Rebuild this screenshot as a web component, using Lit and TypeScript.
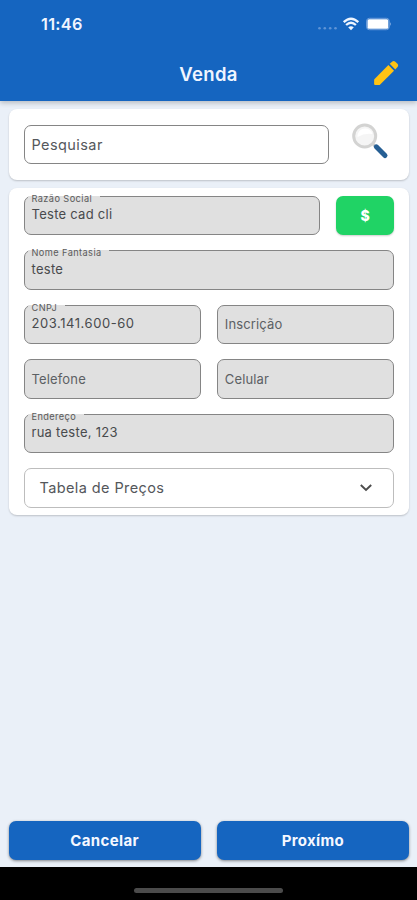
import { LitElement, html, css, nothing } from "lit";
import { customElement, property } from "lit/decorators.js";

@customElement("form-field")
class FormField extends LitElement {
  @property() label = "";
  @property() value = "";

  static styles = css`
    :host { display: block; flex: 1; min-width: 0; }
    .box {
      position: relative; box-sizing: border-box; height: 39.5px;
      border: 1px solid #858585; border-radius: 7px; background: #e0e0e0;
      padding: 0 7px; display: flex; align-items: center;
      font-size: 13px; letter-spacing: 0.15px; color: #5c6064; white-space: nowrap;
    }
    .filled { color: #484a4d; padding-bottom: 2px; letter-spacing: 0.27px; }
    .numeric { letter-spacing: 0.55px; }
    .label {
      position: absolute; left: 3px; top: -4px; padding: 0 7.5px 0 4px;
      font-size: 9.2px; line-height: 11px; letter-spacing: 0.42px; color: #5b5b5b;
      background: linear-gradient(#fff 0 3px, #e0e0e0 3px);
    }
  `;

  render() {
    const numeric = /^[\d.-]+$/.test(this.value);
    return html`<div class="box ${this.value ? "filled" : ""} ${numeric ? "numeric" : ""}">
      ${this.value ? html`<span class="label">${this.label}</span>` : nothing}
      <span>${this.value || this.label}</span>
    </div>`;
  }
}

@customElement("app-root")
class AppRoot extends LitElement {
  static styles = css`
    :host {
      display: flex; flex-direction: column; height: 900px; width: 100%;
      background: #eaf0f8; font-family: Inter, "Liberation Sans", sans-serif; overflow: hidden;
    }
    svg { display: block; }
    header {
      height: 100.5px; box-sizing: border-box; flex: none; background: #1565c0; color: #f0f5ff;
      box-shadow: 0 2px 5px rgba(0, 0, 0, 0.22);
    }
    .status { height: 48px; display: flex; align-items: center; padding: 0 26px 0 41px; justify-content: space-between; }
    .time { font-size: 16.3px; font-weight: 600; letter-spacing: 0.3px; }
    .bar { height: 51px; display: grid; grid-template-columns: 1fr auto 1fr; align-items: center; }
    .title { grid-column: 2; font-size: 18.5px; font-weight: 600; letter-spacing: 0.35px; }
    .edit { justify-self: end; margin-right: 18.5px; }
    main { flex: 1; padding: 8.5px 8px 0 8.5px; display: flex; flex-direction: column; gap: 8px; }
    .card { background: #fff; border-radius: 8px; box-shadow: 0 1px 2px rgba(0, 0, 0, 0.2); box-sizing: border-box; }
    .search { height: 71px; padding: 0 20px 0 15px; display: flex; align-items: center; justify-content: space-between; }
    .lens { margin-bottom: 7px; }
    .input {
      width: 305.5px; height: 39px; box-sizing: border-box; border: 1px solid #858585; border-radius: 7px;
      padding: 0 7px; display: flex; align-items: center; font-size: 14.5px; letter-spacing: 0.42px; color: #55585c;
    }
    .form { height: 327px; padding: 7.6px 15px 0; display: flex; flex-direction: column; gap: 15px; }
    .row { display: flex; gap: 16px; height: 39.5px; }
    .money {
      width: 58px; background: #20d365; color: #fff; border-radius: 7px; display: flex; align-items: center;
      justify-content: center; font-size: 14px; font-weight: 800; box-shadow: 0 1px 2px rgba(0, 0, 0, 0.2);
    }
    .select {
      height: 39.5px; box-sizing: border-box; border: 1px solid #bdbdbd; border-radius: 7px; padding: 0 20px 0 15px;
      display: flex; align-items: center; justify-content: space-between; font-size: 14.5px; letter-spacing: 0.4px; color: #54575b;
    }
    .actions { display: flex; gap: 16px; padding: 0 8px 7.5px 8.5px; }
    .btn {
      flex: 1; height: 38.5px; background: #1565c0; color: #f5f8ff; border-radius: 7px; display: flex; align-items: center;
      justify-content: center; font-size: 15px; font-weight: 700; letter-spacing: 0.35px; box-shadow: 0 1px 3px rgba(0, 0, 0, 0.45);
    }
    .home { height: 33px; background: #000; display: flex; justify-content: center; align-items: flex-end; }
    .pill { width: 149px; height: 5px; border-radius: 3px; background: #4b4b4b; margin-bottom: 7px; }
  `;

  render() {
    return html`
      <header>
        <div class="status">
          <span class="time">11:46</span>
          <svg width="75" height="16" viewBox="0 0 75 16">
            <g fill="#5f94d6"><circle cx="3.5" cy="12.3" r="1.3" /><circle cx="8.8" cy="12.3" r="1.3" /><circle cx="14.2" cy="12.3" r="1.3" /><circle cx="19.5" cy="12.3" r="1.3" /></g>
            <g fill="none" stroke="#eef5ff" stroke-width="2.3">
              <path d="M27.7 6.2Q35 -0.8 42.3 6.2" /><path d="M30.1 9Q35 4.5 39.9 9" />
            </g>
            <path d="M35 14.3L32.2 11.3Q35 9.2 37.8 11.3Z" fill="#eef5ff" />
            <rect x="50.6" y="2.3" width="22.6" height="11.4" rx="2.8" fill="none" stroke="#73a1dc" />
            <rect x="51.5" y="3.2" width="20.8" height="9.6" rx="1.5" fill="#fff" />
            <path d="M74 6.3Q75.6 8 74 9.8Z" fill="#8ab1e3" />
          </svg>
        </div>
        <div class="bar">
          <span class="title">Venda</span>
          <svg class="edit" width="27" height="27" viewBox="0 0 27 27">
            <path d="M2.1 19.4L16.4 5.1L22 10.7L7.7 25H3.1Q2.1 25 2.1 24Z" fill="#ffc313" />
            <path d="M17.7 3.8L20.4 1.4Q21.7 .4 23 1.4L25.7 4.1Q26.7 5.4 25.7 6.7L23.3 9.4Z" fill="#ffc313" />
          </svg>
        </div>
      </header>
      <main>
        <div class="card search">
          <div class="input">Pesquisar</div>
          <svg class="lens" width="38" height="38" viewBox="0 0 38 38">
            <path d="M22 22L26 26" stroke="#c9c9c9" stroke-width="2.5" />
            <path d="M25.3 24.8L34 33.5" stroke="#265f94" stroke-width="5" stroke-linecap="round" />
            <circle cx="13.7" cy="14" r="11" fill="#f5f5f5" stroke="#d3d3d2" stroke-width="3" />
            <path d="M6.5 13Q8 6.5 14 6.5T21.5 12Q14 10.5 6.5 15Z" fill="#fff" />
          </svg>
        </div>
        <div class="card form">
          <div class="row"><form-field label="Razão Social" value="Teste cad cli"></form-field><div class="money">$</div></div>
          <div class="row"><form-field label="Nome Fantasia" value="teste"></form-field></div>
          <div class="row"><form-field label="CNPJ" value="203.141.600-60"></form-field><form-field label="Inscrição"></form-field></div>
          <div class="row"><form-field label="Telefone"></form-field><form-field label="Celular"></form-field></div>
          <div class="row"><form-field label="Endereço" value="rua teste, 123"></form-field></div>
          <div class="select">
            <span>Tabela de Preços</span>
            <svg width="14" height="10" viewBox="0 0 14 10"><path d="M1.8 2L7 7L12.2 2" fill="none" stroke="#4c4c4c" stroke-width="1.9" /></svg>
          </div>
        </div>
      </main>
      <div class="actions"><div class="btn">Cancelar</div><div class="btn">Proxímo</div></div>
      <div class="home"><div class="pill"></div></div>
    `;
  }
}
